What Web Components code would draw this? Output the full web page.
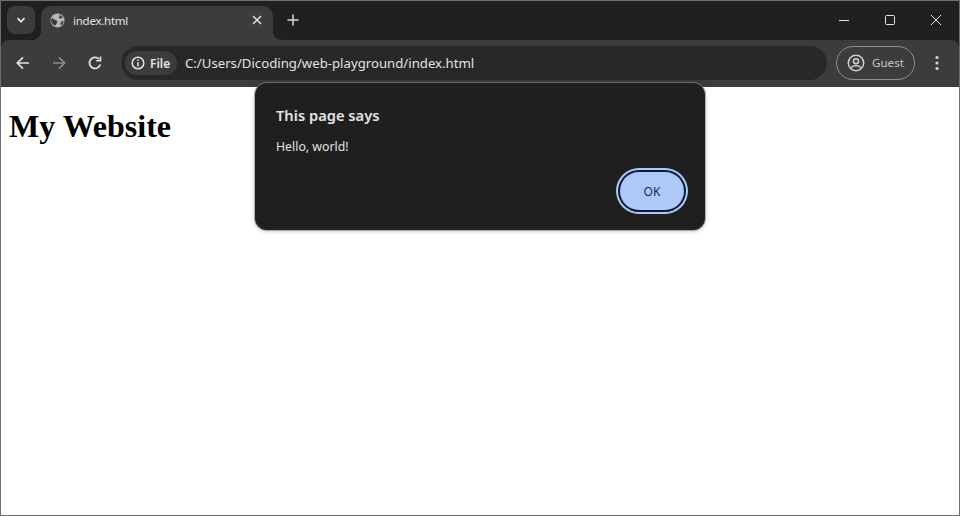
<!DOCTYPE html>
<html>
<head>
<meta charset="utf-8">
<title>index.html</title>
<style>
  html, body { margin: 0; height: 100%; overflow: hidden; }
</style>
</head>
<body>
<browser-window>
  <tab-strip slot="strip"></tab-strip>
  <tool-bar slot="toolbar"></tool-bar>
  <h1 style="font: bold 32px 'Liberation Serif', serif; color: #000; margin: 21px 8px; line-height: 37px;">My Website</h1>
  <js-alert slot="overlay" title-text="This page says" message="Hello, world!"></js-alert>
</browser-window>

<script>
const UI_FONT = `"Noto Sans", "Open Sans", sans-serif`;

class BrowserWindow extends HTMLElement {
  constructor() {
    super();
    this.attachShadow({ mode: "open" });
    this.shadowRoot.innerHTML = /* html */`
    <style>
      :host {
        display: flex;
        flex-direction: column;
        position: relative;
        width: 960px;
        height: 516px;
        box-sizing: border-box;
        border: 1px solid #6e6e6e;
        background: #1f2020;
      }
      .page { flex: 1; background: #fff; }
    </style>
    <slot name="strip"></slot>
    <slot name="toolbar"></slot>
    <div class="page"><slot></slot></div>
    <slot name="overlay"></slot>`;
  }
}

class TabStrip extends HTMLElement {
  constructor() {
    super();
    this.attachShadow({ mode: "open" });
    this.shadowRoot.innerHTML = /* html */`
    <style>
      :host {
        display: flex;
        align-items: flex-end;
        height: 39px;
        background: #1f2020;
        font-family: ${UI_FONT};
      }
      .search {
        width: 28px;
        height: 28px;
        margin: 0 6px 6px 6px;
        border-radius: 8px;
        background: #3c3c3c;
        display: flex;
        align-items: center;
        justify-content: center;
      }
      .tab {
        width: 232px;
        height: 34px;
        box-sizing: border-box;
        background: #3c3c3c;
        border-radius: 10px 10px 0 0;
        display: flex;
        align-items: center;
        padding: 0 9px 6px;
        position: relative;
      }
      .tab::before, .tab::after {
        content: "";
        position: absolute;
        bottom: 0;
        width: 8px;
        height: 8px;
      }
      .tab::before { left: -8px; background: radial-gradient(circle at 0 0, #1f2020 7.5px, #3c3c3c 8px); }
      .tab::after { right: -8px; background: radial-gradient(circle at 100% 0, #1f2020 7.5px, #3c3c3c 8px); }
      .label {
        flex: 1;
        margin-left: 8px;
        font-size: 11.5px;
        letter-spacing: -0.25px;
        color: #e3e3e3;
      }
      .close { margin-right: 1px; display: flex; }
      .new { margin: 0 0 6px 13px; width: 16px; height: 28px; display: flex; align-items: center; }
      .spacer { flex: 1; }
      .win {
        width: 46px;
        height: 38px;
        padding-bottom: 1px;
        display: flex;
        align-items: center;
        justify-content: center;
      }
      svg { display: block; }
    </style>
    <div class="search">
      <svg width="12" height="12" viewBox="0 0 12 12" fill="none" stroke="#e3e3e3" stroke-width="1.7"><path d="M2.5 4.2 6 7.7l3.5-3.5"/></svg>
    </div>
    <div class="tab">
      <svg width="15" height="15" viewBox="0 0 16 16"><circle cx="8" cy="8" r="7.5" fill="#b4b6b8"/><path d="M3 2.500c2-.8 4.200-.6 5.600 0 .4 1.400-.8 2.300-1.800 2.600-.3 1.300-1.300 1.400-2 1.300-.8.600-.2 1.700 1 1.700 1.300 0 2.400.4 2.700 1.600-.1 1.300-1 2-1.700 3-.3 1-1 1.500-1.600 1-.5-1.500-.5-2.800-1.300-3.700C2.500 9.200 1.200 8 1 7c.2-1.800 1-3.300 2-4.500z" fill="#b4b6b8"/><path d="M10 2c1.600.5 3 1.600 3.800 3-1 .2-2 .2-2.800 1-.8-.2-1.400-.6-1.600-1.400.8-.7 1-1.600.6-2.600zM14.500 8.500c-.2 2-1 3.400-2.300 4.600-1-.5-1.200-1.500-1-2.500.9-.2 1.200-1 1.400-1.700.7-.1 1.300-.2 1.900-.4zM2 5.200c1.200.2 2.300 1 3 2 .9.500 2 .7 2.600 1.500.3.900 0 1.700-.7 2.400-.5 1-1 1.800-1.600 2.500C3 12.600 1.500 10.500 1 8c.1-1 .5-2 1-2.800z" fill="#3c3c3c"/></svg>
      <span class="label">index.html</span>
      <span class="close"><svg width="12" height="12" viewBox="0 0 12 12" stroke="#e3e3e3" stroke-width="1.500"><path d="M2 2l8 8M10 2l-8 8"/></svg></span>
    </div>
    <div class="new">
      <svg width="14" height="14" viewBox="0 0 14 14" stroke="#d8d8d8" stroke-width="1.500"><path d="M7 1.500v11M1.500 7h11"/></svg>
    </div>
    <div class="spacer"></div>
    <div class="win"><svg width="12" height="12" viewBox="0 0 12 12" stroke="#e6e6e6"><path d="M1 6.500h10"/></svg></div>
    <div class="win"><svg width="12" height="12" viewBox="0 0 12 12" fill="none" stroke="#e6e6e6"><rect x="1.500" y="1.500" width="9" height="9" rx="1"/></svg></div>
    <div class="win"><svg width="12" height="12" viewBox="0 0 12 12" stroke="#e6e6e6"><path d="M1 1l10 10M11 1L1 11"/></svg></div>`;
  }
}

class ToolBar extends HTMLElement {
  constructor() {
    super();
    this.attachShadow({ mode: "open" });
    this.shadowRoot.innerHTML = /* html */`
    <style>
      :host {
        display: flex;
        align-items: center;
        height: 47px;
        background: #3c3c3c;
        border-radius: 8px 8px 0 0;
        font-family: ${UI_FONT};
        box-sizing: border-box;
        padding: 0 0 1px 4px;
      }
      .nav {
        width: 36px;
        display: flex;
        justify-content: center;
      }
      .omni {
        flex: 1;
        height: 34px;
        margin: 0 9px 0 8px;
        border-radius: 17px;
        background: #282828;
        display: flex;
        align-items: center;
        padding: 0 4px;
      }
      .chip {
        height: 24px;
        width: 52px;
        box-sizing: border-box;
        border-radius: 12px;
        background: #3c3c3c;
        display: flex;
        align-items: center;
        padding-left: 6px;
        gap: 5px;
        font-size: 12px;
        font-weight: 600;
        color: #e3e3e3;
      }
      .url {
        margin-left: 8px;
        font-size: 13.2px;
        color: #e3e3e3;
      }
      .profile {
        width: 79px;
        height: 34px;
        box-sizing: border-box;
        border: 1px solid #8f8f8f;
        border-radius: 17px;
        display: flex;
        align-items: center;
        padding-left: 10px;
        gap: 7px;
        font-size: 11.6px;
        color: #c7c7c7;
      }
      .profile span { margin-top: -2px; }
      .menu { width: 44px; display: flex; justify-content: center; }
      svg { display: block; }
    </style>
    <span class="nav"><svg width="16" height="16" viewBox="0 0 16 16" fill="none" stroke="#e3e3e3" stroke-width="1.700"><path d="M14 8H2.500M8 2.300 2.300 8 8 13.700"/></svg></span>
    <span class="nav"><svg width="16" height="16" viewBox="0 0 16 16" fill="none" stroke="#8a8a8a" stroke-width="1.700"><path d="M2 8h11.500M8 2.300 13.700 8 8 13.700"/></svg></span>
    <span class="nav"><svg width="16" height="16" viewBox="0 0 16 16" fill="none" stroke="#e3e3e3" stroke-width="1.800"><path d="M13.300 9.500A5.500 5.500 0 1 1 12 4.100"/><path d="M13.500 1.500v4.300H9.200" stroke-width="1.600"/></svg></span>
    <div class="omni">
      <span class="chip">
        <svg width="14" height="14" viewBox="0 0 14 14" fill="none" stroke="#e3e3e3" stroke-width="1.500"><circle cx="7" cy="7" r="5.800"/><path d="M7 6.200v4" stroke-width="1.600"/><path d="M7 3.500v1.500" stroke-width="1.600"/></svg>
        File
      </span>
      <span class="url">C:/Users/Dicoding/web-playground/index.html</span>
    </div>
    <div class="profile">
      <svg width="18" height="18" viewBox="0 0 18 18" fill="none" stroke="#d0d0d0" stroke-width="1.500"><circle cx="9" cy="9" r="7.700"/><circle cx="9" cy="7.200" r="2.500"/><path d="M3.800 14c1.500-1.800 3.300-2.400 5.200-2.400s3.700.6 5.200 2.400"/></svg>
      <span>Guest</span>
    </div>
    <span class="menu"><svg width="4" height="16" viewBox="0 0 4 16" fill="#d8d8d8"><circle cx="2" cy="2.500" r="1.600"/><circle cx="2" cy="8" r="1.600"/><circle cx="2" cy="13.500" r="1.600"/></svg></span>`;
  }
}

class JsAlert extends HTMLElement {
  constructor() {
    super();
    this.attachShadow({ mode: "open" });
  }

  connectedCallback() {
    this.shadowRoot.innerHTML = /* html */`
    <style>
      :host {
        display: block;
        position: absolute;
        left: 254px;
        top: 82px;
        width: 450px;
        height: 147px;
        box-sizing: border-box;
        padding: 21px 21px 0 21px;
        background: #1f1f1f;
        border-radius: 12px;
        box-shadow: 0 0 0 1px #8a8a8a99, 0 1px 4px #0004;
        font-family: ${UI_FONT};
      }
      .title {
        font-size: 14.7px;
        font-weight: 600;
        line-height: 22px;
        color: #e3e3e3;
      }
      .msg {
        margin-top: 12px;
        font-size: 12.3px;
        line-height: 18px;
        color: #e3e3e3;
      }
      .actions {
        display: flex;
        justify-content: flex-end;
        margin-top: 16px;
      }
      button {
        all: unset;
        box-sizing: border-box;
        width: 64px;
        height: 38px;
        border-radius: 19px;
        background: #aec9f7;
        box-shadow: 0 0 0 2px #0f1b33, 0 0 0 4px #aec9f7;
        color: #062e6f;
        font-size: 12px;
        text-align: center;
      }
    </style>
    <div class="title">${this.getAttribute("title-text")}</div>
    <div class="msg">${this.getAttribute("message")}</div>
    <div class="actions"><button>OK</button></div>`;
  }
}

customElements.define("browser-window", BrowserWindow);
customElements.define("tab-strip", TabStrip);
customElements.define("tool-bar", ToolBar);
customElements.define("js-alert", JsAlert);
</script>
</body>
</html>
